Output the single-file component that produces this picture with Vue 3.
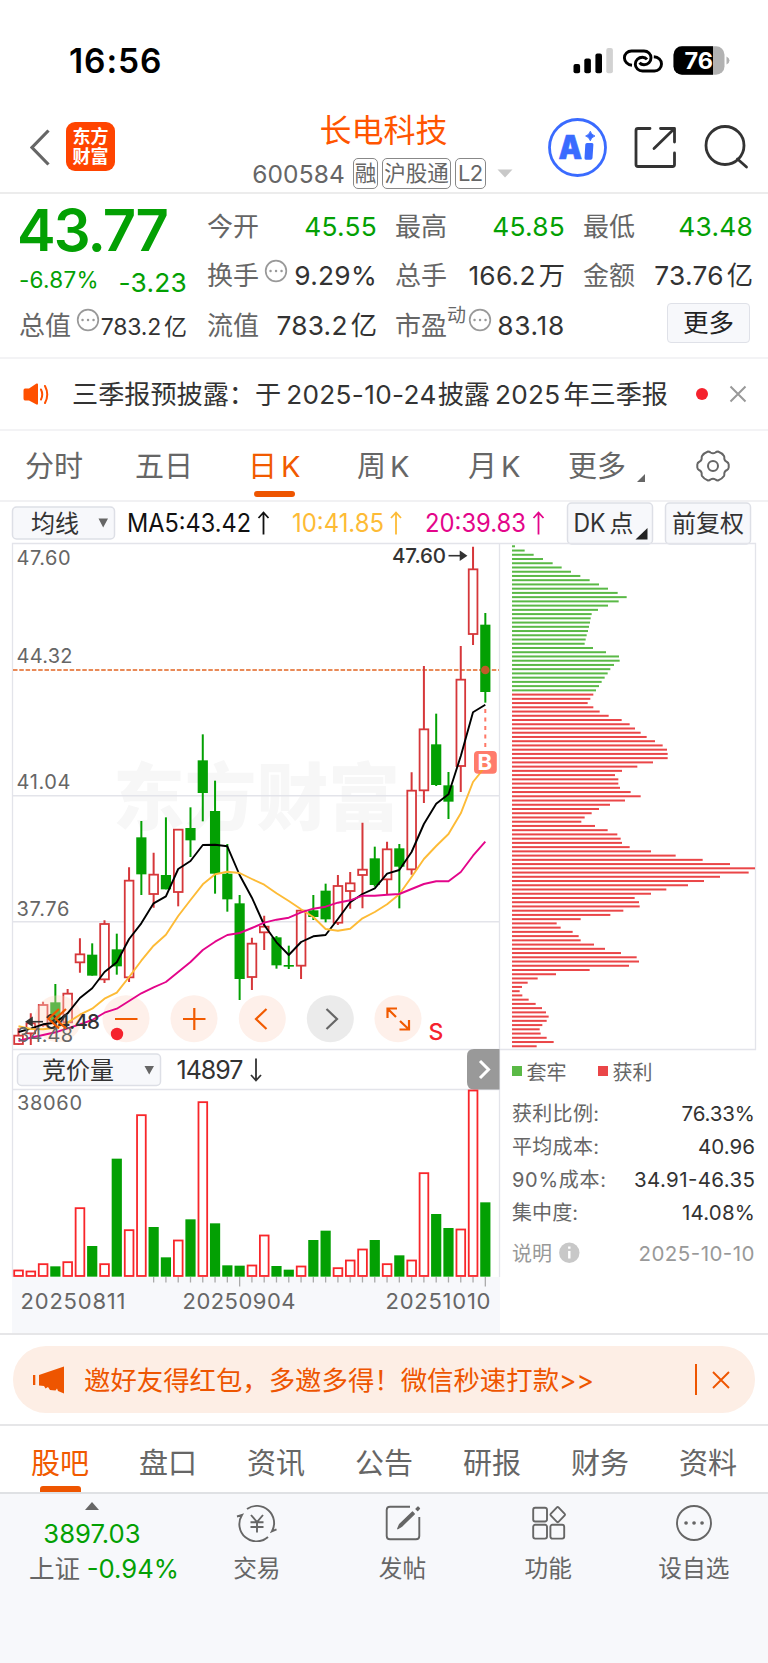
<script setup>
const step = 12.285
const cx = (i) => 18.5 + step * i
const py = (v) => 540 + v / 3

// [rising, high, body top, body bottom, low]
const candles = [
  [1, 1465, 1487, 1512, 1515], [1, 1420, 1450, 1480, 1515], [1, 1385, 1395, 1455, 1460],
  [0, 1332, 1387, 1440, 1450], [1, 1347, 1361, 1447, 1455], [1, 1195, 1243, 1267, 1298],
  [0, 1210, 1244, 1307, 1307], [1, 1141, 1152, 1318, 1329], [0, 1181, 1228, 1279, 1304],
  [1, 982, 1022, 1312, 1326], [0, 843, 892, 1003, 1065], [1, 938, 1004, 1062, 1103],
  [0, 832, 1005, 1048, 1048], [1, 869, 869, 1056, 1099], [0, 802, 864, 901, 951],
  [0, 583, 661, 759, 844], [0, 722, 813, 1001, 1061], [0, 912, 1001, 1078, 1115],
  [0, 1065, 1090, 1317, 1380], [1, 1193, 1211, 1311, 1350], [1, 1127, 1160, 1177, 1230],
  [0, 1188, 1192, 1276, 1286], [0, 1217, 1275, 1280, 1287], [1, 1108, 1112, 1277, 1317],
  [0, 1065, 1111, 1131, 1140], [0, 1031, 1052, 1138, 1147], [1, 1005, 1038, 1148, 1155],
  [1, 996, 1030, 1053, 1106], [1, 848, 989, 1005, 1105], [0, 920, 955, 1035, 1040],
  [1, 905, 928, 1018, 1063], [0, 912, 925, 980, 1105], [1, 697, 752, 988, 1004],
  [1, 378, 568, 751, 789], [0, 521, 613, 735, 738], [0, 696, 736, 785, 837],
  [1, 318, 419, 678, 756], [1, 20, 88, 282, 315], [0, 219, 254, 456, 488]
].map(([up, h, t, b, l], i) => ({ up, x: cx(i), h: py(h), t: py(t), b: py(b), l: py(l) }))

const line = (arr) => arr.map((v, i) => `${cx(i).toFixed(1)},${py(v).toFixed(1)}`).join(' ')
const ma5 = line([1476, 1466, 1453, 1448, 1420, 1374, 1345, 1296, 1267, 1197, 1150, 1090, 1069, 987, 963, 915, 914, 919, 1005, 1073, 1155, 1207, 1245, 1206, 1189, 1185, 1137, 1087, 1062, 1045, 1001, 990, 936, 852, 791, 763, 648, 517, 494])
const ma10 = line([1459, 1467, 1468, 1463, 1448, 1424, 1406, 1376, 1358, 1311, 1262, 1217, 1184, 1128, 1080, 1033, 1003, 995, 999, 1017, 1034, 1060, 1083, 1108, 1131, 1167, 1172, 1166, 1135, 1116, 1093, 1063, 1011, 957, 918, 882, 820, 726, 680])
const ma20 = line([1503, 1493, 1485, 1477, 1465, 1453, 1440, 1418, 1406, 1383, 1360, 1342, 1326, 1296, 1266, 1230, 1205, 1185, 1179, 1164, 1148, 1139, 1133, 1117, 1106, 1100, 1088, 1081, 1067, 1067, 1064, 1062, 1047, 1032, 1024, 1024, 996, 947, 905])

const chips = [
  45, 74, 101, 129, 158, 185, 213, 241, 269, 297, 324, 353, 380, 356, 324, 294, 275, 272, 270, 267, 264, 260, 257, 254, 279, 318, 357, 359, 342, 331, 323, 314, 305, 297, 288,
  280, 271, 263, 280, 299, 326, 365, 389, 405, 422, 440, 465, 488, 501, 503, 503, 459, 412, 366, 345, 355, 355, 360, 392, 422, 375, 330,
  297, 275, 254, 244, 285, 323, 352, 362, 366, 389, 453, 527, 608, 690, 765, 746, 660, 612, 564, 499, 453, 404, 417, 419, 370, 331, 242, 170, 182, 218,
  236, 242, 282, 315, 363, 410, 417, 387, 269, 168, 113, 83, 66, 59, 67, 86, 107, 126, 138, 146, 140, 127, 119, 122, 140, 161, 110
].map((v, i) => ({ y: 545.3 + i * 4.237, w: (v - 36) / 3, c: i < 35 ? '#5ab946' : '#ea4648' }))

const volumes = [
  [1, 690], [1, 693], [1, 671], [0, 679], [1, 665], [1, 503], [0, 618], [1, 671], [0, 356], [1, 569],
  [1, 224], [0, 561], [0, 652], [1, 600], [0, 538], [1, 185], [0, 550], [0, 676], [0, 677], [1, 675],
  [1, 585], [0, 678], [0, 689], [1, 678], [0, 600], [0, 572], [1, 683], [1, 660], [1, 627], [0, 600],
  [1, 671], [0, 646], [1, 660], [1, 398], [0, 522], [0, 564], [1, 567], [1, 150], [0, 487]
].map(([up, t], i) => ({ up, x: cx(i), y: 1040 + t / 3, h: (710 - t) / 3 }))

const ticks = Array.from({ length: 28 }, (_, k) => k + 11).map((i) => ({ x: cx(i), y: i === 18 || i === 38 ? 1286.5 : 1282.5 }))

const scale = [['47.60', 565, 53], ['44.32', 663, 55], ['41.04', 789, 53], ['37.76', 916, 52]]

const stats = [
  ['获利比例:', '76.33%', 73.5, 87], ['平均成本:', '40.96', 57, 87], ['90%成本:', '34.91-46.35', 121, 94], ['集中度:', '14.08%', 73, 66]
]
const sections = ['股吧', '盘口', '资讯', '公告', '研报', '财务', '资料']
</script>

<template>
  <div class="page">
    <div class="status">
      <span class="time">16:56</span>
      <svg class="sys" width="160" height="36" viewBox="570 43 160 36">
        <rect x="573.5" y="64" width="6.6" height="9.3" rx="2" />
        <rect x="584.3" y="58.5" width="6.6" height="14.8" rx="2" />
        <rect x="595.4" y="53.5" width="6.6" height="19.8" rx="2" />
        <rect x="606.3" y="48" width="6.6" height="25.3" rx="2" fill="#d2d2d2" />
        <g fill="none" stroke="#000" stroke-width="2.9" stroke-linecap="butt">
          <path d="M632 65.300C627.500 65 624.400 61.500 624.400 57.700C624.400 54 627.500 51 631.500 51H644C648 51 651 54 651 57.800C651 61.700 648 64.800 644 64.800C642 64.800 640.500 64 639.500 62.800" />
          <path d="M653.800 56.800C658.500 57 661.500 60.300 661.500 64C661.500 68 658.300 71 654.500 71H642.500C638.500 71 635.300 68 635.300 64.200C635.300 60.300 638.500 57.200 642.500 57.200C644.500 57.200 646 58 647 59.300" />
        </g>
        <rect x="673.500" y="46.300" width="51" height="28.400" rx="8.500" fill="#b2b2b2" />
        <path d="M682 46.300H713V74.700H682A8.500 8.500 0 0 1 673.500 66.200V54.800A8.500 8.500 0 0 1 682 46.300Z" />
        <path d="M726.500 56.500Q729.500 58 729.500 60.500Q729.500 63 726.500 64.500Z" fill="#b2b2b2" />
        <text x="684.500" y="69" class="batt" textLength="28.500" lengthAdjust="spacingAndGlyphs">76</text>
      </svg>
    </div>

    <header class="nav">
      <svg class="back" width="20" height="38" viewBox="30 128 20 38"><path d="M48.500 130.500L32 147.500L48.500 164.500" fill="none" stroke="#666" stroke-width="3.200" /></svg>
      <div class="logo"><span>东方</span><span>财富</span></div>
      <div class="title">
        <h1>长电科技</h1>
        <div class="code">
          <span class="num">600584</span>
          <i class="tag">融</i><i class="tag">沪股通</i><i class="tag l2">L2</i>
          <svg width="16" height="9" viewBox="0 0 16 9"><path d="M.5 .5H15.500L8 8.500Z" fill="#c8c8c8" /></svg>
        </div>
      </div>
      <svg class="tools" width="210" height="64" viewBox="546 115 210 64">
        <circle cx="577.500" cy="147.500" r="28" fill="none" stroke="#3a6bff" stroke-width="2.800" />
        <text x="558.500" y="158.700" class="ai" textLength="23.500" lengthAdjust="spacingAndGlyphs">A</text>
        <path d="M587 143H592Q593.500 143 593.400 144.500L592.500 158Q592.300 159.700 590.800 159.700H586Q584.300 159.700 584.500 158L585.300 144.500Q585.400 143 587 143Z" fill="#3a6bff" />
        <path d="M590.300 131.200Q591.300 134.800 595 136Q591.300 137.200 590.300 140.800Q589.300 137.200 585.600 136Q589.300 134.800 590.300 131.200Z" fill="#3a6bff" stroke="#3a6bff" stroke-width=".8" />
        <g fill="none" stroke="#333" stroke-width="2.800" stroke-linecap="round" stroke-linejoin="round">
          <path d="M650 128.500H638Q636 128.500 636 130.500V164.500Q636 166.500 638 166.500H672.500Q674.500 166.500 674.500 164.500V153" />
          <path d="M660.500 128.500H674.500V142M674 129L654 148.500" />
          <circle cx="725" cy="145.500" r="19" />
          <path d="M737.500 159L746.500 167" />
        </g>
      </svg>
    </header>

    <section class="quote">
      <div class="price">43.77</div>
      <div class="cell"><label>今开</label><b class="dn">45.55</b></div>
      <div class="cell"><label>最高</label><b class="dn">45.85</b></div>
      <div class="cell"><label>最低</label><b class="dn">43.48</b></div>
      <div class="cell chg"><b class="dn pct">-6.87%</b><b class="dn">-3.23</b></div>
      <div class="cell"><label>换手<svg class="dots" viewBox="0 0 24 24"><circle cx="12" cy="12" r="10.300" /><path d="M6.500 12h.1M12 12h.1M17.500 12h.1" /></svg></label><b>9.29%</b></div>
      <div class="cell"><label>总手</label><b>166.2<em>万</em></b></div>
      <div class="cell"><label>金额</label><b>73.76<em>亿</em></b></div>
      <div class="cell"><label>总值<svg class="dots" viewBox="0 0 24 24"><circle cx="12" cy="12" r="10.300" /><path d="M6.500 12h.1M12 12h.1M17.500 12h.1" /></svg></label><b class="small">783.2<em>亿</em></b></div>
      <div class="cell"><label>流值</label><b>783.2<em>亿</em></b></div>
      <div class="cell"><label>市盈<sup>动</sup><svg class="dots tight" viewBox="0 0 24 24"><circle cx="12" cy="12" r="10.300" /><path d="M6.500 12h.1M12 12h.1M17.500 12h.1" /></svg></label><b class="pe">83.18</b></div>
      <div class="cell end"><button class="more">更多</button></div>
    </section>

    <section class="notice">
      <svg width="28" height="24" viewBox="22 382 28 24">
        <path d="M25 388.500H29L36.500 383.500Q38 383 38 384.500V403.500Q38 405 36.500 404.500L29 400.500H25Q23.500 400.500 23.500 398.500V390.500Q23.500 388.500 25 388.500Z" fill="#ff5000" />
        <path d="M41 389.500Q43.500 394.500 41 399.500M45 386Q49.500 394.500 45 403" fill="none" stroke="#ff5000" stroke-width="2" stroke-linecap="round" />
      </svg>
      <p><span>三季报预披露：于</span><span class="d1">2025-10-24</span><span>披露</span><span class="d2">2025</span><span>年三季报</span></p>
      <i class="red-dot"></i>
      <svg class="x" width="18" height="18" viewBox="0 0 18 18"><path d="M1.500 1.500L16.500 16.500M16.500 1.500L1.500 16.500" stroke="#999" stroke-width="2" /></svg>
    </section>

    <nav class="periods">
      <span class="p1">分时</span><span class="p2">五日</span><span class="p3 on">日<i>K</i></span><span class="p4">周<i>K</i></span><span class="p5">月<i>K</i></span>
      <span class="p6">更多<svg width="8" height="8" viewBox="0 0 8 8"><path d="M8 0V8H0Z" fill="#666" /></svg></span>
      <svg class="gear" width="36" height="36" viewBox="-18 -18 36 36" fill="none" stroke="#666" stroke-width="2">
        <path d="M-5 -14.500Q-3.500 -14.500 -2.500 -13.500Q0 -12 2.500 -13.500Q3.500 -14.500 5 -14.500Q9 -13 11 -10Q11.500 -9 11.300 -7.500Q11.500 -5 14 -4Q15.500 -3.200 15.700 -1.500V1.500Q15.500 3.200 14 4Q11.500 5 11.300 7.500Q11.500 9 11 10Q9 13 5 14.500Q3.500 14.500 2.500 13.500Q0 12 -2.500 13.500Q-3.500 14.500 -5 14.500Q-9 13 -11 10Q-11.500 9 -11.300 7.500Q-11.500 5 -14 4Q-15.500 3.200 -15.700 1.500V-1.500Q-15.500 -3.200 -14 -4Q-11.500 -5 -11.300 -7.500Q-11.500 -9 -11 -10Q-9 -13 -5 -14.500Z" />
        <circle r="5" />
      </svg>
    </nav>

    <svg class="chart" width="768" height="831" viewBox="0 502 768 831">
      <!-- indicator bar -->
      <g class="btn">
        <rect x="12.500" y="507" width="102" height="32" rx="4" />
        <rect x="567.500" y="503" width="85" height="41" rx="4" />
        <rect x="665.500" y="503" width="85" height="41" rx="4" />
        <rect x="17.500" y="1054" width="143" height="31.500" rx="4" />
      </g>
      <g font-size="24" fill="#333">
        <text x="31" y="531.500">均线</text>
        <text x="573.500" y="532" font-size="25" textLength="32" lengthAdjust="spacingAndGlyphs">DK</text><text x="609.500" y="531.500">点</text>
        <text x="672" y="531.500">前复权</text>
        <text x="42" y="1078.500">竞价量</text>
        <text x="176.500" y="1079" font-size="25" textLength="67">14897</text>
      </g>
      <path d="M98.500 518.500H108L103.200 527.500Z M144.500 1066H154L149.200 1074.500Z" fill="#666" />
      <path d="M647.500 528V539.500H635.500Z" fill="#222" />
      <g font-size="25">
        <text x="127" y="532" fill="#111" textLength="124" lengthAdjust="spacingAndGlyphs">MA5:43.42</text>
        <text x="292" y="532" fill="#fdbb36" textLength="92" lengthAdjust="spacingAndGlyphs">10:41.85</text>
        <text x="425" y="532" fill="#e3058a" textLength="101" lengthAdjust="spacingAndGlyphs">20:39.83</text>
      </g>
      <g fill="none" stroke-width="1.800">
        <path d="M263.500 534.500V512M258.500 518L263.500 512.500L268.500 518" stroke="#111" />
        <path d="M396 534.500V512M391 518L396 512.500L401 518" stroke="#fdbb36" />
        <path d="M538.500 534.500V512M533.500 518L538.500 512.500L543.500 518" stroke="#e3058a" />
        <path d="M256 1058.500V1081M251 1075L256 1080.500L261 1075" stroke="#333" />
      </g>

      <!-- frames -->
      <rect x="12" y="1277" width="488" height="56" fill="#f7f8fb" />
      <path d="M12.500 1277V543.500H755.500V1049.500H12M499.500 543V1277M12 1089.500H499" fill="none" stroke="#e3e4ea" stroke-width="1.300" />
      <text x="113" y="824" class="watermark" textLength="287" lengthAdjust="spacingAndGlyphs">东方财富</text>
      <path d="M12 795.700H499M12 921.700H499" stroke="#e3e4ea" stroke-width="1.600" />
      <path d="M13 670H499" stroke="#e98a58" stroke-width="1.800" stroke-dasharray="4.500 1.800" />

      <g v-for="(c, i) in candles" :key="'c' + i">
        <template v-if="c.up">
          <path :d="`M${c.x} ${c.h}V${c.t}M${c.x} ${c.b}V${c.l}`" stroke="#d6373a" stroke-width="2" />
          <rect :x="c.x - 4.300" :y="c.t" width="8.700" :height="c.b - c.t" fill="#fff" stroke="#d6373a" stroke-width="1.800" />
        </template>
        <template v-else>
          <path :d="`M${c.x} ${c.h}V${c.l}`" stroke="#03a003" stroke-width="2" />
          <rect :x="c.x - 5.100" :y="c.t" width="10.200" :height="c.b - c.t" fill="#03a003" />
        </template>
      </g>

      <!-- chart controls -->
      <circle cx="58" cy="1018.700" r="23.500" fill="#ffd9c6" fill-opacity=".38" />
      <g fill="#fef0ea">
        <circle cx="126" cy="1018.700" r="23.500" /><circle cx="194" cy="1018.700" r="23.500" />
        <circle cx="262.300" cy="1018.700" r="23.500" /><circle cx="398" cy="1018.700" r="23.500" />
      </g>
      <circle cx="330.300" cy="1018.700" r="23.500" fill="#ebebeb" />
      <g fill="none" stroke-width="1.900" stroke-linejoin="round">
        <polyline :points="ma5" stroke="#000" />
        <polyline :points="ma10" stroke="#fdbb36" />
        <polyline :points="ma20" stroke="#e3058a" />
      </g>
      <g class="mark">
        <text x="392" y="562.700" textLength="54">47.60</text>
        <text x="45" y="1029.300" textLength="55">34.48</text>
      </g>
      <g stroke="#333" stroke-width="1.600" fill="#333">
        <path d="M448.500 555.700H461" /><path d="M460.500 552L466 555.700L460.500 559.400Z" />
        <path d="M43 1021.700H32" /><path d="M32 1018L26.500 1021.700L32 1025.400Z" />
      </g>
      <g class="scale">
        <text v-for="s in scale" :key="s[0]" x="16.500" :y="s[1]" :textLength="s[2] + 1">{{ s[0] }}</text>
        <text x="17" y="1041.700" textLength="56">34.48</text>
        <text x="17" y="1110" textLength="65">38060</text>
      </g>
      <g fill="none" stroke="#f15a00" stroke-width="2.200">
        <path d="M59 1009L48.500 1018.700L59 1028.500M66 1009L55.500 1018.700L66 1028.500" />
        <path d="M115 1019H137.500M183 1019H205.500M194.300 1008V1030" />
        <path d="M266.500 1009L256 1019L266.500 1029" />
        <path d="M387.500 1018V1008.500H397M387.500 1008.500L396 1017M399.500 1029.500H409V1020M409 1029.500L400 1021" />
      </g>
      <path d="M326.500 1009L337 1019L326.500 1029" fill="none" stroke="#666" stroke-width="2.200" />
      <circle cx="117" cy="1034" r="6.200" fill="#f5222d" />
      <text x="428.500" y="1040" class="sell">S</text>
      <circle cx="485.300" cy="670" r="4.300" fill="#c05a28" />
      <path d="M485.300 709V747" stroke="#ff7867" stroke-width="2" stroke-dasharray="4 4.500" />
      <rect x="474" y="751" width="22.800" height="22.800" rx="4" fill="#ff7b6b" />
      <path d="M480 773L485.300 766" stroke="#f79a2c" stroke-width="2" />
      <text x="477.500" y="770.300" class="buy">B</text>

      <!-- chip distribution -->
      <rect v-for="(b, i) in chips" :key="'b' + i" x="512" :y="b.y" :width="b.w" height="2" :fill="b.c" />

      <!-- auction volume -->
      <path d="M499.500 1049H474Q467 1049 467 1056V1082Q467 1089.500 474 1089.500H499.500Z" fill="#999" />
      <path d="M480 1061L488.500 1069.500L480 1078" fill="none" stroke="#fff" stroke-width="3" />
      <template v-for="(v, i) in volumes" :key="'v' + i">
        <rect v-if="v.up" :x="v.x - 4.300" :y="v.y + .5" width="8.700" :height="v.h - 1.200" fill="#fff" stroke="#f8262a" stroke-width="1.800" />
        <rect v-else :x="v.x - 5.100" :y="v.y" width="10.200" :height="v.h" fill="#03a003" />
      </template>
      <path v-for="t in ticks" :key="t.x" :d="`M${t.x} 1277V${t.y}`" stroke="#aaa" stroke-width="1.300" />
      <g class="dates">
        <text x="20.500" y="1308.500" textLength="105">20250811</text>
        <text x="182.500" y="1308.500" textLength="113">20250904</text>
        <text x="385.500" y="1308.500" textLength="105">20251010</text>
      </g>

      <!-- holdings summary -->
      <rect x="512" y="1066" width="10" height="10" fill="#5ab946" />
      <rect x="598" y="1066" width="10" height="10" fill="#ea4648" />
      <g font-size="20" fill="#666">
        <text x="526.500" y="1079.500">套牢</text><text x="612.500" y="1079.500">获利</text>
      </g>
      <g v-for="(s, i) in stats" :key="s[0]" font-size="20">
        <text x="512" :y="1121.300 + i * 32.800" fill="#666" :textLength="s[3]">{{ s[0] }}</text>
        <text :x="755 - s[2]" :y="1121.300 + i * 32.800" fill="#333" class="val" :textLength="s[2]">{{ s[1] }}</text>
      </g>
      <g font-size="20" fill="#999">
        <text x="512" y="1260.500">说明</text>
        <text x="638.500" y="1260.500" class="val" textLength="116">2025-10-10</text>
      </g>
      <circle cx="569.300" cy="1252.700" r="10.200" fill="#c8c8c8" />
      <path d="M569.300 1251V1258.500M569.300 1246.500V1248.700" stroke="#fff" stroke-width="2.400" />
    </svg>

    <section class="promo">
      <div class="pill">
        <svg width="34" height="30" viewBox="32 1365 34 30" fill="#ee5500">
          <path d="M33 1375H35.300V1385H33ZM39 1375L64 1366.500V1393.500L58 1391L57 1388.500L55.500 1390.500L50 1390L48 1387L45.500 1388.500L44 1386L39 1385.500Z" />
        </svg>
        <p>邀好友得红包，多邀多得！微信秒速打款&gt;&gt;</p>
        <i class="bar"></i>
        <svg width="18" height="18" viewBox="0 0 18 18"><path d="M1 1L17 17M17 1L1 17" stroke="#ee5500" stroke-width="1.900" /></svg>
      </div>
    </section>

    <nav class="sections"><span v-for="(s, i) in sections" :key="s" :class="{ on: i === 0 }">{{ s }}</span></nav>

    <footer class="dock">
      <div class="index">
        <svg width="14" height="8" viewBox="0 0 14 8"><path d="M7 0L14 8H0Z" fill="#666" /></svg>
        <b>3897.03</b>
        <div><span>上证</span><b>-0.94%</b></div>
      </div>
      <div class="item">
        <svg viewBox="-21 -19 42 38"><path d="M-10 -14A17.200 17.200 0 0 1 15 8.300L19.500 6.300M11 14A17.200 17.200 0 0 1 -15 -8L-20 -6.500M-6 -8L0 -1L6 -8M0 -1V9.500M-6.500 -.8H6.500M-6.500 4H6.500" /></svg>
        <span>交易</span>
      </div>
      <div class="item">
        <svg viewBox="-21 -19 42 38"><path d="M7 -16.300H-13Q-16.300 -16.300 -16.300 -13V13Q-16.300 16.300 -13 16.300H13Q16.300 16.300 16.300 13V-6" /><path d="M9.500 -11L11.300 -9L-1.500 3.500L-5.300 5.800L-3.500 1.500ZM13 -14L15 -16L16.500 -14.500L14.700 -12.500Z" fill="#666" stroke-width="1.200" stroke-linejoin="round" /></svg>
        <span>发帖</span>
      </div>
      <div class="item">
        <svg viewBox="-21.700 -19 42 38"><rect x="-15.500" y="-15.300" width="13.800" height="13.800" rx="2" /><rect x="-15.500" y="1.800" width="13.800" height="13.800" rx="2" /><rect x="1.700" y="1.800" width="13.800" height="13.800" rx="2" /><path d="M8.200 -15.600Q9 -16.400 9.800 -15.600L16 -9.200Q16.700 -8.400 16 -7.600L9.800 -1.200Q9 -.5 8.200 -1.200L2 -7.600Q1.300 -8.400 2 -9.200Z" /></svg>
        <span>功能</span>
      </div>
      <div class="item">
        <svg viewBox="-21 -19 42 38"><circle r="17" /><path d="M-8 0h.1M0 0h.1M8 0h.1" stroke-width="3.600" stroke-linecap="round" /></svg>
        <span>设自选</span>
      </div>
    </footer>
  </div>
</template>

<style>
html, body { background: #fff; }
</style>

<style scoped>
.page { width: 768px; height: 1663px; overflow: hidden; background: #fff; color: #333; font-family: "Inter", "Noto Sans CJK SC", sans-serif; font-size: 26px; display: flex; flex-direction: column; }
.page > * { flex: none; box-sizing: border-box; }
b, i, em, h1, p { font-weight: 400; font-style: normal; margin: 0; }
svg { display: block; flex: none; }

.status { height: 101px; display: flex; justify-content: space-between; align-items: center; padding: 21px 38px 0 69px; }
.time { color: #000; font-size: 33.500px; font-weight: 600; letter-spacing: .900px; }
.batt { font-size: 23px; font-weight: 700; fill: #fff; }

.nav { height: 93px; border-bottom: 2px solid #ececec; display: flex; align-items: center; padding: 0 12px 0 30px; }
.logo { width: 49px; height: 49px; margin-left: 16px; border-radius: 9px; background: #ff4400; color: #fff; font-weight: 700; font-size: 18px; line-height: 20px; display: flex; flex-direction: column; align-items: center; justify-content: center; }
.title { flex: 1; display: flex; flex-direction: column; align-items: center; padding-left: 104px; }
.title h1 { font-size: 32px; line-height: 50px; color: #ff5500; margin: -1px -2px 1px 0; padding-top: 4px; }
.code { display: flex; align-items: center; height: 33px; color: #666; font-size: 24.500px; }
.num { letter-spacing: 0.100px; margin-right: 8px; }
.tag { box-sizing: border-box; height: 31px; border: 1.500px solid #888; border-radius: 5px; padding: 0 1px; margin-right: 4px; font-size: 21.500px; line-height: 28px; }
.l2 { font-size: 22px; letter-spacing: -0.500px; padding: 0 2px; margin-right: 11px; }
.ai { font: 900 33px "Inter", sans-serif; fill: #3a6bff; stroke: #3a6bff; stroke-width: .6; }

.quote { height: 165px; border-bottom: 2px solid #f3f3f5; padding: 8px 16px 0 20px; display: grid; grid-template-columns: repeat(4, 168px); grid-auto-rows: 49.300px; column-gap: 20px; }
.price { color: #03a003; font-weight: 600; font-size: 58px; line-height: 56px; letter-spacing: -1.900px; margin-left: -3px; }
.cell { display: flex; justify-content: space-between; align-items: center; line-height: 49px; color: #333; margin: 0 -1px; }
.cell label { color: #666; display: flex; align-items: center; }
.cell b { letter-spacing: .25px; white-space: nowrap; font-size: 26.300px; }
.cell em { margin-left: 3px; letter-spacing: 0; }
.cell .dn { color: #03a003; }
.chg { padding-top: 13px; height: 49px; box-sizing: border-box; margin-right: 1px; }
.chg b.pct { font-size: 22.500px; margin-top: -5px; }
.cell b.small { font-size: 23px; padding-top: 4px; letter-spacing: -.2px; margin-right: 2px; }
.dots { width: 24px; height: 24px; margin: -10px 0 0 5px; fill: none; stroke: #999; stroke-width: 1.700; stroke-linecap: round; }
.dots path { stroke-width: 2.400; }
.tight { margin-left: 2px; }
.cell .pe { letter-spacing: .7px; }
sup { font-size: 19px; line-height: 20px; margin-top: -18px; }
.end { justify-content: flex-end; }
.more { width: 83px; height: 40px; margin-right: 3px; margin-top: -4px; box-sizing: border-box; border: 1.500px solid #dfe1e8; border-radius: 4px; background: #f7f8fb; font: inherit; font-size: 25.500px; line-height: 34px; color: #222; padding: 0; }

.notice { height: 72px; border-bottom: 2px solid #f3f3f5; display: flex; align-items: center; padding: 0 21px 0 22px; }
.notice p { margin-left: 22px; display: flex; font-size: 26.150px; line-height: 37px; width: 601px; white-space: nowrap; }
.d1 { margin: 0 1px 0 5px; letter-spacing: .35px; }
.d2 { margin: 0 3px 0 5px; letter-spacing: .3px; }
.red-dot { width: 12px; height: 12px; border-radius: 6px; background: #f5222d; margin: 0 21px 0 24px; }

.periods { height: 71px; border-bottom: 2px solid #f1f1f3; display: flex; align-items: flex-start; padding-left: 25px; font-size: 29px; line-height: 72px; color: #666; }
.periods span { position: relative; display: flex; box-sizing: border-box; }
.periods i { margin-left: 4px; }
.p1, .p2 { width: 110px; } .p2 { width: 113px; } .p3 { width: 109px; } .p4 { width: 111px; } .p5 { width: 100px; } .p6 { width: 126px; align-items: flex-end; }
.p6 svg { margin: 0 0 21px 11px; }
.on { color: #f15a00; }
.p3.on::after { content: ""; position: absolute; left: 6px; top: 60px; width: 41px; height: 6px; border-radius: 3px; background: #ee5500; }
.gear { margin: 17px 0 0 1px; }

.chart { font-family: "Inter", "Noto Sans CJK SC", sans-serif; }
.btn rect { fill: #f7f8fb; stroke: #dddfe6; stroke-width: 1.500; }
.watermark { font-size: 73px; font-weight: 900; fill: #f7f7f7; }
.mark { font-size: 20.500px; font-weight: 500; fill: #333; }
.scale { font-size: 20px; fill: #666; }
.dates { font-size: 22px; fill: #666; }
.sell { font-size: 23px; font-weight: 500; fill: #f5222d; }
.buy { font-size: 22px; font-weight: 700; fill: #fff; }
.val { font-size: 20.500px; }

.promo { height: 93px; border-top: 2px solid #e6e6e8; border-bottom: 2px solid #e6e6e8; padding: 11px 13px; }
.pill { height: 67px; border-radius: 33px; background: #fdeee5; color: #ee5500; display: flex; align-items: center; padding: 0 25px 0 19px; }
.pill p { margin-left: 18px; width: 612px; font-size: 26.400px; line-height: 36px; white-space: nowrap; }
.bar { width: 2px; height: 31px; background: #ee5500; margin-right: 15px; margin-left: auto; }

.sections { height: 68px; border-bottom: 2px solid #dfe1e4; padding: 0 6px; display: flex; font-size: 29px; line-height: 75px; color: #666; }
.sections span { flex: 1; height: 66px; text-align: center; position: relative; }
.sections .on { color: #f15a00; }
.sections .on::after { content: ""; position: absolute; left: 34px; bottom: 0; width: 41px; height: 6px; border-radius: 3px 3px 0 0; background: #ee5500; }

.dock { flex: 1 !important; background: #f7f8fb; display: flex; color: #666; }
.index { width: 184px; display: flex; flex-direction: column; align-items: center; }
.index > svg { margin-top: 8px; }
.index b { color: #03a003; font-size: 25.700px; line-height: 47px; letter-spacing: 0; }
.index div { display: flex; align-self: flex-start; width: 150px; justify-content: space-between; line-height: 36px; font-size: 25.500px; margin: -6px 0 0 29px; }
.index div b { line-height: 36px; }
.item { width: 145.700px; display: flex; flex-direction: column; align-items: center; font-size: 23.700px; line-height: 36px; }
.item svg { width: 42px; height: 38px; margin: 10px 0 9px; fill: none; stroke: #666; stroke-width: 1.900; }
</style>
